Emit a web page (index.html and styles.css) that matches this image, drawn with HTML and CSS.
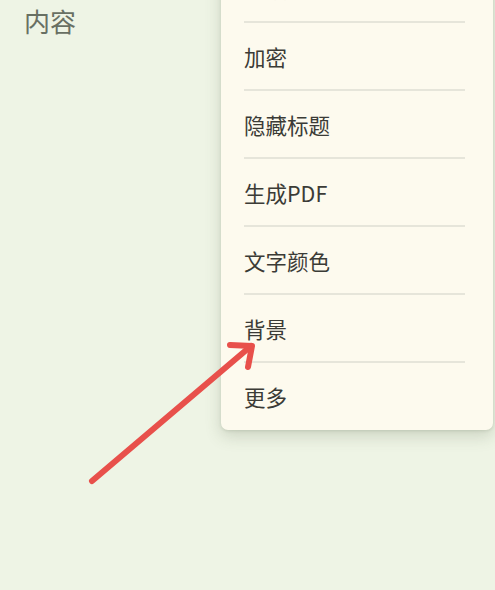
FILE: index.html
```html
<!DOCTYPE html>
<html lang="zh">
<head>
<meta charset="utf-8">
<link rel="stylesheet" href="styles.css">
</head>
<body>
<div class="page">
  <div class="title">内容</div>
  <div class="menu">
    <div class="item faint">置顶</div>
    <div class="item">加密</div>
    <div class="item">隐藏标题</div>
    <div class="item">生成PDF</div>
    <div class="item">文字颜色</div>
    <div class="item">背景</div>
    <div class="item last">更多</div>
  </div>
  <svg class="arrow" width="495" height="590" viewBox="0 0 495 590">
    <g stroke="#e8504b" stroke-width="6" stroke-linecap="round" stroke-linejoin="round" fill="none">
      <line x1="92" y1="481" x2="251" y2="346"/>
      <polyline points="230,345 252,346 248,367"/>
    </g>
  </svg>
</div>
</body>
</html>
```
FILE: styles.css
```css
html, body {
  margin: 0;
  padding: 0;
}
body {
  background: #eef4e5;
  font-family: "Noto Sans CJK SC", "Noto Sans", sans-serif;
}
.page {
  position: relative;
  width: 495px;
  height: 590px;
  overflow: hidden;
}
.title {
  padding: 2px 0 0 24px;
  font-size: 26px;
  line-height: 38px;
  color: #687063;
}
.menu {
  position: absolute;
  left: 221px;
  top: -45px;
  width: 272px;
  background: #fdfaee;
  border-radius: 0 0 7px 7px;
  box-shadow: 0 6px 16px rgba(80, 95, 70, 0.22), 0 1px 3px rgba(80, 95, 70, 0.15);
}
.item {
  margin: 0 28px 0 23px;
  height: 66px;
  display: flex;
  align-items: center;
  font-size: 21.5px;
  color: #3b3b36;
  border-bottom: 2px solid #e6e5da;
}
.item.faint {
  color: #f5f1e2;
}
.item.last {
  border-bottom: none;
  height: 67px;
}
.arrow {
  position: absolute;
  left: 0;
  top: 0;
}
```
